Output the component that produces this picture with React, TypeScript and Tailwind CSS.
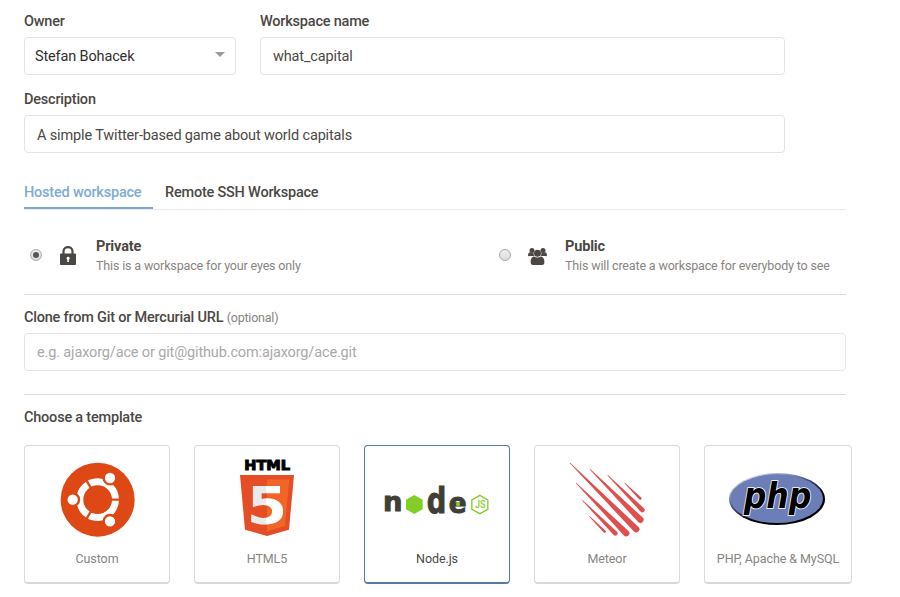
import type { ReactNode } from "react";

function LockIcon() {
  return (
    <svg width="16" height="19" viewBox="0 0 16 19" className="-mt-px text-[#4b4843]">
      <path d="M3.5 9V5.2a4.5 4.1 0 0 1 9 0V9" fill="none" stroke="currentColor" strokeWidth="2.2" />
      <path
        fill="currentColor"
        fillRule="evenodd"
        d="M1 7.5h14a1 1 0 0 1 1 1V18a1 1 0 0 1-1 1H1a1 1 0 0 1-1-1V8.500a1 1 0 0 1 1-1zM8 10.800a1.500 1.500 0 0 0-.7 2.800v2.500h1.600v-2.500A1.500 1.500 0 0 0 8 10.800z"
      />
    </svg>
  );
}

function GroupIcon() {
  return (
    <svg width="19" height="18" viewBox="0 0 19 18" fill="#4b4843">
      <circle cx="4" cy="3.400" r="2.500" />
      <circle cx="15" cy="3.400" r="2.500" />
      <path d="M0 8.500c0-2.500 1-3.200 2-3.200 1.600.8 2.800.7 3.800.3-.5 1.200-.2 2.400.6 3.500H1.500C.6 9.600 0 9.300 0 8.500zM19 8.500c0-2.500-1-3.200-2-3.200-1.600.8-2.800.7-3.800.3.500 1.200.2 2.400-.6 3.500h4.900c.9.500 1.500.2 1.500-.6z" />
      <circle cx="9.500" cy="6.300" r="3.500" />
      <path d="M6 9.500c2.200 1.300 4.800 1.300 7 0 2.400.2 3.600 3.200 3.400 5.900 0 1.700-1 2.500-2.500 2.500H5.200c-1.500 0-2.500-.8-2.500-2.500C2.500 12.700 3.600 9.700 6 9.500z" />
    </svg>
  );
}

function Logo({ children }: { children: ReactNode }) {
  return (
    <svg width="120" height="85" viewBox="66 45 360 255" className="shrink-0">
      {children}
    </svg>
  );
}

function UbuntuLogo() {
  return (
    <Logo>
      <circle cx="248" cy="179" r="111" fill="#dd4814" />
      <circle cx="248" cy="179" r="53.500" fill="none" stroke="#fff" strokeWidth="21" />
      <g stroke="#dd4814" strokeWidth="7">
        <path d="M285 179h32M229.500 147l-17-29M229.500 211l-17 29" />
        <circle cx="173" cy="179" r="19" fill="#fff" />
        <circle cx="285" cy="114" r="19" fill="#fff" />
        <circle cx="285" cy="244" r="19" fill="#fff" />
      </g>
    </Logo>
  );
}

function Html5Logo() {
  return (
    <Logo>
      <text x="178" y="91" textLength="137" lengthAdjust="spacingAndGlyphs" stroke="#000" strokeWidth="3" className="fill-black font-['DejaVu_Sans',sans-serif] text-[41px] font-bold">
        HTML
      </text>
      <path d="M165 105h162l-15 164-66 19-66-19z" fill="#e44d26" />
      <path d="M246 118h67l-13 140-54 16z" fill="#f16529" />
      <defs>
        <linearGradient id="five">
          <stop offset="49%" stopColor="#ebebeb" />
          <stop offset="49%" stopColor="#fff" />
        </linearGradient>
      </defs>
      <text x="185" y="251" textLength="121" lengthAdjust="spacingAndGlyphs" fill="url(#five)" className="font-['DejaVu_Sans',sans-serif] text-[152px] font-bold">
        5
      </text>
    </Logo>
  );
}

function NodeLogo() {
  return (
    <Logo>
      <g fill="#403f36" stroke="#403f36" strokeWidth="3" className="font-['DejaVu_Sans',sans-serif] font-bold">
        <text transform="translate(84 214) scale(1 1)" className="text-[82px]">n</text>
        <text transform="translate(215 220) scale(0.76 1)" className="text-[108px]">d</text>
        <text transform="translate(281 219) scale(0.92 1)" className="text-[86px]">e</text>
      </g>
      <path d="M178 165l25 14v29l-25 14-25-14v-29z" fill="#83cd29" />
      <circle cx="309" cy="193" r="6" fill="#83cd29" />
      <path d="M374.500 166l24 14v28l-24 13-24-13v-28z" fill="none" stroke="#83cd29" strokeWidth="4" />
      <text x="360" y="204" textLength="31" lengthAdjust="spacingAndGlyphs" className="fill-[#83cd29] font-['Roboto',sans-serif] text-[30px] font-medium">
        JS
      </text>
    </Logo>
  );
}

const streaks = [
  { x: 135, y: 69, length: 281, r: 9.5 },
  { x: 195, y: 88, length: 214, r: 9.5 },
  { x: 248, y: 106, length: 147, r: 7 },
  { x: 299, y: 129, length: 66, r: 4 },
  { x: 153, y: 129, length: 213, r: 9.5 },
  { x: 172, y: 181, length: 140, r: 7 },
  { x: 193, y: 229, length: 65, r: 4 },
];

function MeteorLogo() {
  return (
    <Logo>
      {streaks.map((s) => (
        <path
          key={s.x}
          transform={`translate(${s.x} ${s.y}) rotate(45)`}
          d={`M0 -1L${s.length} ${-s.r}a${s.r} ${s.r} 0 0 1 0 ${s.r * 2}L0 1z`}
          fill="#df4f4f"
        />
      ))}
    </Logo>
  );
}

function PhpLogo() {
  return (
    <Logo>
      <defs>
        <linearGradient id="rim" x1="0" y1="0" x2="0.7" y2="1">
          <stop offset="0.150" stopColor="#d9dcec" />
          <stop offset="0.450" stopColor="#4b5687" />
          <stop offset="0.700" stopColor="#000" />
        </linearGradient>
      </defs>
      <ellipse cx="243" cy="177" rx="144" ry="78" fill="url(#rim)" />
      <ellipse cx="242" cy="176" rx="139" ry="73" fill="#6c7eb7" />
      <text x="143" y="203" textLength="203" lengthAdjust="spacingAndGlyphs" stroke="#fff" strokeWidth="5" paintOrder="stroke" className="fill-black font-['DejaVu_Sans',sans-serif] text-[104px] font-bold italic">
        php
      </text>
    </Logo>
  );
}

const templates = [
  { name: "Custom", logo: <UbuntuLogo />, width: "w-[146px]" },
  { name: "HTML5", logo: <Html5Logo />, width: "w-[146px]" },
  { name: "Node.js", logo: <NodeLogo />, width: "w-[146px]", selected: true },
  { name: "Meteor", logo: <MeteorLogo />, width: "w-[146px]" },
  { name: "PHP, Apache & MySQL", logo: <PhpLogo />, width: "w-[148px]" },
];

function Label({ children }: { children: ReactNode }) {
  return <div className="h-5 font-medium leading-[22px] tracking-[-0.21px]">{children}</div>;
}

const field = "flex h-[38px] items-center rounded-[4px] border border-[#e4e4e4] px-3";

function Visibility({ checked, icon, title, note }: { checked?: boolean; icon: ReactNode; title: string; note: string }) {
  return (
    <div className="flex">
      <span className="ml-1.5 mt-[13px] flex size-3 items-center justify-center rounded-full border border-[#a9a9a9] bg-linear-to-b from-[#eeeeee] to-[#dcdcdc]">
        {checked && <span className="size-1.5 rounded-full bg-[#555]" />}
      </span>
      <span className="ml-4 mt-[11px] flex w-5 justify-center">{icon}</span>
      <div className="ml-[18px]">
        <div className="h-5 font-bold leading-[22px] tracking-[-0.15px]">{title}</div>
        <div className="text-[12.500px] leading-[19px] tracking-[-0.155px] text-[#888581]">{note}</div>
      </div>
    </div>
  );
}

export default function App() {
  return (
    <main className="h-[597px] w-[900px] overflow-hidden bg-white pl-6 pt-[11px] font-['Roboto',sans-serif] text-[14.500px] tracking-[-0.145px] text-[#4b4843]">
      <div className="flex gap-6">
        <div className="w-[212px]">
          <Label>Owner</Label>
          <div className="mt-1.5 flex h-[38px] items-center justify-between rounded-[4px] border border-[#e4e4e4] px-2.5 pt-0.5 text-[#32302d]">
            Stefan Bohacek
            <svg width="10" height="5" viewBox="0 0 10 5" className="-mt-1.5">
              <path d="M0 0h10L5 5z" fill="#999" />
            </svg>
          </div>
        </div>
        <div className="w-[525px]">
          <Label>Workspace name</Label>
          <div className={`${field} mt-1.5 pt-0.5`}>what_capital</div>
        </div>
      </div>
      <div className="mt-3.5 w-[761px]">
        <Label>Description</Label>
        <div className={`${field} mt-1.5 pt-1`}>A simple Twitter-based game about world capitals</div>
      </div>

      <nav className="mt-[29px] flex h-7 w-[822px] gap-3 border-b border-[#ebebeb] font-medium leading-[22px] tracking-[-0.21px]">
        <span className="h-[27px] w-[129px] border-b-2 border-[#7ba7d6] text-[#7cabd8]">Hosted workspace</span>
        <span>Remote SSH Workspace</span>
      </nav>

      <div className="flex h-[85px] w-[822px] border-b border-[#dcdcdc] pt-[26px]">
        <div className="w-[469px]">
          <Visibility checked icon={<LockIcon />} title="Private" note="This is a workspace for your eyes only" />
        </div>
        <Visibility icon={<GroupIcon />} title="Public" note="This will create a workspace for everybody to see" />
      </div>

      <div className="h-[100px] w-[822px] border-b border-[#dcdcdc] pt-3">
        <Label>
          Clone from Git or Mercurial URL <span className="text-[12.500px] font-normal text-[#888581]">(optional)</span>
        </Label>
        <div className={`${field} mt-1.5 pt-0.5 text-[#a9a9a9]`}>e.g. ajaxorg/ace or git@github.com:ajaxorg/ace.git</div>
      </div>

      <div className="mt-3">
        <Label>Choose a template</Label>
      </div>
      <div className="mt-[18px] flex gap-6">
        {templates.map((t) => (
          <div
            key={t.name}
            className={`${t.width} flex h-[139px] flex-col items-center rounded-[4px] border border-b-2 pt-[9px] ${
              t.selected ? "border-[#567a9b] text-[#4b4843]" : "border-[#d9d9d9] text-[#888581]"
            }`}
          >
            {t.logo}
            <span className="mt-2.5 whitespace-nowrap text-[12.500px] leading-[18px] tracking-[-0.08px]">{t.name}</span>
          </div>
        ))}
      </div>
    </main>
  );
}
